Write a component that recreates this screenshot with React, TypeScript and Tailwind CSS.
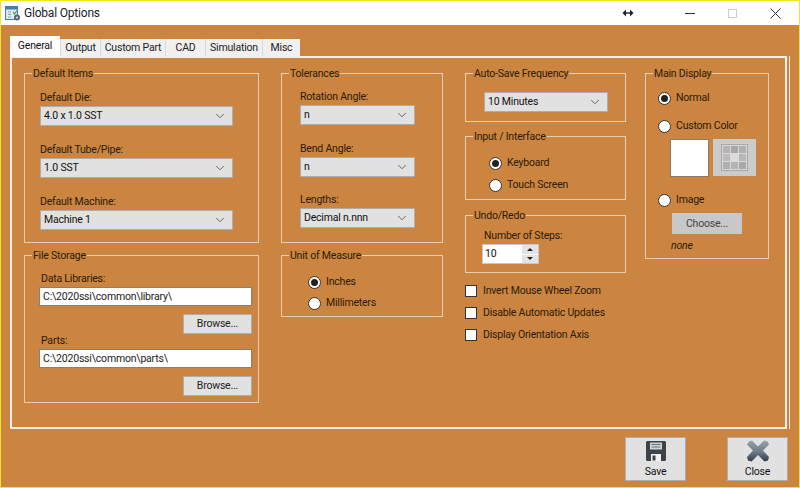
import type { ReactNode } from "react";
import { ChevronDown } from "lucide-react";

const TABS = [
  { label: "Output", width: "w-[40px]" },
  { label: "Custom Part", width: "w-[65px]" },
  { label: "CAD", width: "w-[40px]" },
  { label: "Simulation", width: "w-[57px]" },
  { label: "Misc", width: "w-[38px]" },
];

const SWATCHES = [
  "bg-[#b4b4b4]",
  "bg-[#a8a8a8]",
  "bg-[#b0b0b0]",
  "bg-[#bcbcbc]",
  "bg-[#dcdcdc]",
  "bg-[#b8b8b8]",
  "bg-[#b0b0b0]",
  "bg-[#b4b4b4]",
  "bg-[#a8a8a8]",
];

function Group({ title, className, children }: { title: string; className: string; children: ReactNode }) {
  return (
    <fieldset className={`border border-[#e6cfb4] ${className}`}>
      <legend className="ml-[7px] h-[16px] px-[1px] leading-[18px]">{title}</legend>
      {children}
    </fieldset>
  );
}

function Select({ value, className }: { value: string; className: string }) {
  return (
    <div className={`flex h-[20px] items-center justify-between border border-[#adadad] bg-[#e1e1e1] pl-[3px] pr-[5px] text-[#111] ${className}`}>
      <span>{value}</span>
      <ChevronDown className="h-[14px] w-[14px] text-[#555]" strokeWidth={1.5} />
    </div>
  );
}

function Field({ label, value, width, className = "" }: { label: string; value: string; width: string; className?: string }) {
  return (
    <div className={className}>
      <div className="h-[16px] leading-[16px]">{label}</div>
      <Select value={value} className={width} />
    </div>
  );
}

function Radio({ label, checked = false, className = "" }: { label: string; checked?: boolean; className?: string }) {
  return (
    <div className={`flex h-[16px] items-center gap-[5px] leading-[16px] ${className}`}>
      <span className="flex h-[13px] w-[13px] items-center justify-center rounded-full border border-[#333] bg-white">
        {checked && <span className="h-[7px] w-[7px] rounded-full bg-[#222]" />}
      </span>
      {label}
    </div>
  );
}

function Check({ label }: { label: string }) {
  return (
    <div className="flex h-[16px] items-center gap-[6px] leading-[16px]">
      <span className="h-[12px] w-[12px] border border-[#333] bg-white" />
      {label}
    </div>
  );
}

function SmallButton({ label, className }: { label: string; className: string }) {
  return (
    <div className={`flex items-center justify-center border border-[#adadad] bg-[#e1e1e1] text-[#222] ${className}`}>{label}</div>
  );
}

function PathField({ label, value, className = "" }: { label: string; value: string; className?: string }) {
  return (
    <div className={className}>
      <div className="ml-[1px] h-[16px] leading-[16px]">{label}</div>
      <div className="-ml-[1px] flex h-[19px] w-[213px] items-center border border-[#8a8072] bg-white pl-[3px] text-[#222]">{value}</div>
      <SmallButton label="Browse..." className="ml-[143px] mt-[8px] h-[20px] w-[69px]" />
    </div>
  );
}

function AppIcon() {
  return (
    <svg width="16" height="17" viewBox="0 0 16 17" className="shrink-0">
      <rect x="0.5" y="1.5" width="12" height="13" fill="#dfe9f3" stroke="#3f7fb5" />
      <rect x="1" y="2" width="11" height="2.5" fill="#3f7fb5" />
      <path d="M3 7h3M3 9.5h3M3 12h3" stroke="#7fa6c8" />
      <path d="M8 7l1.5 2L12 5.5" stroke="#4e9a4e" strokeWidth="1.2" fill="none" />
      <circle cx="12" cy="12.5" r="3" fill="#5a6670" />
      <circle cx="12" cy="12.5" r="1" fill="#dfe9f3" />
    </svg>
  );
}

function TitleBar() {
  return (
    <div className="flex h-[24px] items-center bg-white pl-[4px] text-[#222]">
      <AppIcon />
      <span className="ml-[3px] w-[80px] text-[12px]">Global Options</span>
      <svg width="12" height="8" viewBox="0 0 12 8" className="ml-[518px]">
        <path d="M3.5 4h5" stroke="#222" strokeWidth="1.4" />
        <path d="M4 0.5v7L0.5 4zM8 0.5v7L11.5 4z" fill="#222" />
      </svg>
      <span className="ml-[51px] h-[1px] w-[10px] bg-[#333]" />
      <span className="ml-[33px] h-[9px] w-[9px] border border-[#ccc]" />
      <svg width="11" height="11" viewBox="0 0 11 11" className="ml-[33px]">
        <path d="M0.5 0.5l10 10M10.5 0.5l-10 10" stroke="#333" />
      </svg>
    </div>
  );
}

function Tabs() {
  return (
    <div className="ml-[9px] mt-[10px] flex h-[21px] items-end">
      <div className="z-10 -mb-[1px] flex h-[21px] w-[50px] items-center justify-center bg-white pb-[2px] text-[#111]">General</div>
      {TABS.map((t) => (
        <div key={t.label} className={`flex h-[17px] items-center justify-center border-l border-[#d9d9d9] bg-[#f0f0f0] text-[#222] ${t.width}`}>
          {t.label}
        </div>
      ))}
    </div>
  );
}

function SaveIcon() {
  return (
    <svg width="22" height="22" viewBox="0 0 22 22">
      <path d="M2 1h18l1 1v18l-1 1H2l-1-1V2z" fill="#3d4348" />
      <rect x="5" y="2.5" width="12" height="7" rx="0.5" fill="#cfd3d6" />
      <path d="M6.5 4.5h9M6.5 7h9" stroke="#6a7075" />
      <rect x="6" y="14" width="10" height="7" fill="#f2f2f2" />
      <rect x="7.5" y="15.5" width="3" height="5" fill="#3d4348" />
    </svg>
  );
}

function CloseIcon() {
  return (
    <svg width="24" height="22" viewBox="0 0 24 22">
      <defs>
        <linearGradient id="closeGrad" x1="0" y1="0" x2="0" y2="1">
          <stop offset="0" stopColor="#9aa2a8" />
          <stop offset="0.55" stopColor="#6d7a86" />
          <stop offset="1" stopColor="#2f3a46" />
        </linearGradient>
      </defs>
      <path
        d="M3 1.5l3-1L12 6.5 18 .5l3.5 1 1.5 3L17 10.5l6 6.5-1 3.5-3.5 1L12 15l-6.5 6.5-3.5-1L1 17l6-6.5L1 4.5z"
        fill="url(#closeGrad)"
      />
    </svg>
  );
}

function BigButton({ label, icon, className = "" }: { label: string; icon: ReactNode; className?: string }) {
  return (
    <div className={`flex h-[44px] w-[61px] flex-col items-center border border-[#adadad] bg-[#e1e1e1] pt-[2px] text-[#111] ${className}`}>
      {icon}
      <span className="mt-[2px] leading-[16px]">{label}</span>
    </div>
  );
}

export default function App() {
  return (
    <div
      className="flex h-[488px] w-[800px] flex-col overflow-hidden whitespace-nowrap border border-[#f2e61e] bg-[#cc8540] text-[10.5px] tracking-[-0.2px] text-[#2a1a08]"
      style={{ fontFamily: 'Roboto, sans-serif' }}
    >
      <TitleBar />
      <Tabs />
      <div className="ml-[9px] flex h-[373px] w-[777px] border-2 border-[#f4efe8] pl-[12px] pt-[7px] shadow-[2px_0_0_#cc8540,3px_0_0_#f4efe8,0_2px_0_#cc8540]">
        {/* column 1 */}
        <div className="flex w-[235px] flex-col gap-[4px]">
          <Group title="Default Items" className="h-[178px]">
            <div className="pl-[15px] pt-[9px]">
              <Field label="Default Die:" value="4.0 x 1.0 SST" width="w-[193px]" />
              <Field label="Default Tube/Pipe:" value="1.0 SST" width="w-[193px]" className="mt-[16px]" />
              <Field label="Default Machine:" value="Machine 1" width="w-[193px]" className="mt-[16px]" />
            </div>
          </Group>
          <Group title="File Storage" className="h-[156px]">
            <div className="pl-[15px] pt-[8px]">
              <PathField label="Data Libraries:" value="C:\2020ssi\common\library\" />
              <PathField label="Parts:" value="C:\2020ssi\common\parts\" className="-mt-[1px]" />
            </div>
          </Group>
        </div>
        {/* column 2 */}
        <div className="ml-[22px] flex w-[162px] flex-col gap-[4px]">
          <Group title="Tolerances" className="h-[178px]">
            <div className="pl-[18px] pt-[8px]">
              <Field label="Rotation Angle:" value="n" width="w-[115px]" />
              <Field label="Bend Angle:" value="n" width="w-[115px]" className="mt-[16px]" />
              <Field label="Lengths:" value="Decimal n.nnn" width="w-[115px]" className="mt-[15px]" />
            </div>
          </Group>
          <Group title="Unit of Measure" className="h-[70px]">
            <div className="pl-[26px] pt-[11px]">
              <Radio label="Inches" checked />
              <Radio label="Millimeters" className="mt-[5px]" />
            </div>
          </Group>
        </div>
        {/* column 3 */}
        <div className="ml-[22px] flex w-[161px] flex-col">
          <Group title="Auto-Save Frequency" className="h-[57px]">
            <div className="pl-[18px] pt-[11px]">
              <Select value="10 Minutes" className="w-[124px]" />
            </div>
          </Group>
          <Group title="Input / Interface" className="mt-[6px] h-[72px]">
            <div className="pl-[23px] pt-[11px]">
              <Radio label="Keyboard" checked />
              <Radio label="Touch Screen" className="mt-[6px]" />
            </div>
          </Group>
          <Group title="Undo/Redo" className="mt-[7px] h-[66px]">
            <div className="pl-[18px] pt-[5px]">
              <div className="h-[16px] leading-[16px]">Number of Steps:</div>
              <div className="-ml-[2px] flex h-[20px] w-[57px] items-center justify-between border border-[#c8c8c8] bg-white pl-[2px] text-[#111]">
                10
                <span className="flex h-full w-[16px] flex-col bg-[#e4e4e4] text-[#222]">
                  <span className="flex flex-1 items-center justify-center border-b border-white">
                    <span className="h-0 w-0 border-x-[3px] border-b-[3px] border-x-transparent border-b-[#222]" />
                  </span>
                  <span className="flex flex-1 items-center justify-center">
                    <span className="h-0 w-0 border-x-[3px] border-t-[3px] border-x-transparent border-t-[#222]" />
                  </span>
                </span>
              </div>
            </div>
          </Group>
          <div className="mt-[10px] flex flex-col gap-[6px]">
            <Check label="Invert Mouse Wheel Zoom" />
            <Check label="Disable Automatic Updates" />
            <Check label="Display Orientation Axis" />
          </div>
        </div>
        {/* column 4 */}
        <div className="ml-[19px] w-[124px]">
          <Group title="Main Display" className="h-[194px]">
            <div className="pl-[12px] pt-[9px]">
              <Radio label="Normal" checked />
              <Radio label="Custom Color" className="mt-[12px]" />
              <div className="ml-[12px] mt-[5px] flex gap-[4px]">
                <div className="h-[38px] w-[39px] border border-[#8a7a66] bg-white" />
                <div className="flex h-[37px] w-[43px] items-center justify-center bg-[#cbcbcb]">
                  <div className="grid h-[27px] w-[27px] grid-cols-3 gap-[1px] border border-[#a8a8a8] bg-[#d8d8d8] p-[1px]">
                    {SWATCHES.map((c, i) => (
                      <span key={i} className={c} />
                    ))}
                  </div>
                </div>
              </div>
              <Radio label="Image" className="mt-[15px]" />
              <SmallButton label="Choose..." className="ml-[14px] mt-[5px] h-[21px] w-[70px] !border-[#c8c8c8] !bg-[#c8c8c8] text-[#444]" />
              <div className="ml-[13px] mt-[4px] h-[16px] italic leading-[16px]">none</div>
            </div>
          </Group>
        </div>
      </div>
      <div className="mt-[8px] flex pl-[624px]">
        <BigButton label="Save" icon={<SaveIcon />} />
        <BigButton label="Close" icon={<CloseIcon />} className="ml-[41px]" />
      </div>
    </div>
  );
}
